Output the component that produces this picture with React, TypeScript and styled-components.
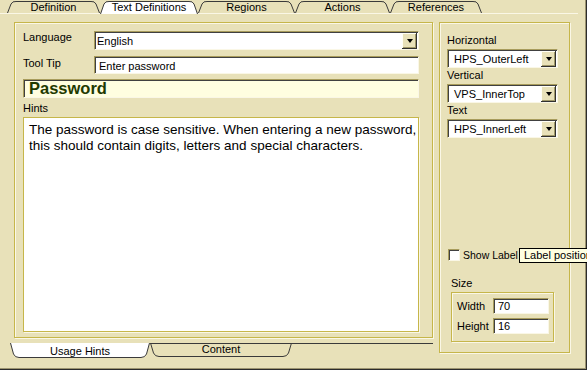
import React from 'react';
import styled, { createGlobalStyle } from 'styled-components';

const colors = {
  face: '#E8E1B9',
  line: '#C6B64A',
  light: '#FAF7E6',
  dark: '#3A3A3A',
  olive: '#A89C5C',
  note: '#FFFEE0',
};

const GlobalStyle = createGlobalStyle`
  html, body { margin: 0; padding: 0; background: ${colors.face}; }
  * { box-sizing: border-box; }
`;

const Window = styled.div`
  position: relative;
  width: 587px;
  height: 370px;
  overflow: hidden;
  background: ${colors.face};
  font-family: 'Liberation Sans', Arial, sans-serif;
  font-size: 11px;
  color: #000;
  box-shadow: inset -1px -1px 0 #2c2c2c, inset -2px -2px 0 #9c9470;
`;

const TopBar = styled.div`
  display: flex;
  height: 14px;
  width: 578px;
  padding-left: 7px;
  border-bottom: 1px solid ${colors.light};
`;

const TabShape = styled.div<{ $w: number; $h: number; $active?: boolean }>`
  position: relative;
  width: ${(p) => p.$w}px;
  height: ${(p) => p.$h}px;
  flex: none;
  z-index: ${(p) => (p.$active ? 1 : 0)};
  svg { position: absolute; inset: 0; }
`;

const TabText = styled.span<{ $top: number }>`
  position: relative;
  display: block;
  text-align: center;
  line-height: 13px;
  padding-top: ${(p) => p.$top}px;
  white-space: nowrap;
`;

const TopTab = ({ w, label, active }: { w: number; label: string; active?: boolean }) => {
  const h = active ? 14 : 13;
  return (
    <TabShape $w={w} $h={h} $active={active}>
      <svg width={w} height={h}>
        <path
          d={`M0.5,${h} L4,4 Q5.5,1 9,1.5 H${w - 9} Q${w - 5.5},1 ${w - 4},4 L${w - 0.5},${h}`}
          fill={active ? '#fff' : colors.face}
          stroke={colors.dark}
          strokeWidth={1}
        />
      </svg>
      <TabText $top={1}>{label}</TabText>
    </TabShape>
  );
};

const BottomTab = ({ w, label, active }: { w: number; label: string; active?: boolean }) => {
  const h = active ? 15 : 14;
  return (
    <TabShape $w={w} $h={h} $active={active}>
      <svg width={w} height={h}>
        <path
          d={`M0.5,0 L3.5,${h - 4} Q5,${h - 0.5} 9,${h - 0.5} H${w - 9} Q${w - 5},${h - 0.5} ${w - 3.5},${h - 4} L${w - 0.5},0`}
          fill={active ? '#fff' : colors.face}
          stroke={colors.dark}
          strokeWidth={1}
        />
        {!active && <line x1={0} y1={0.5} x2={w} y2={0.5} stroke={colors.dark} />}
      </svg>
      <TabText $top={active ? 2 : 0}>{label}</TabText>
    </TabShape>
  );
};

const Body = styled.div`
  display: flex;
  padding: 8px 0 0 14px;
`;

const LeftColumn = styled.div`
  display: flex;
  flex-direction: column;
  width: 419px;
`;

const Group = styled.div`
  display: flex;
  flex-direction: column;
  border: 1px solid ${colors.line};
  box-shadow: 1px 1px 0 ${colors.light}, inset 1px 1px 0 ${colors.light};
`;

const MainGroup = styled(Group)`
  height: 316px;
  padding: 8px 13px 5px 8px;
`;

const Row = styled.div<{ $gap?: number }>`
  display: flex;
  align-items: flex-start;
  margin-bottom: ${(p) => p.$gap ?? 0}px;
`;

const Label = styled.span<{ $w?: number; $top?: number }>`
  display: block;
  line-height: 13px;
  white-space: nowrap;
  padding-top: ${(p) => p.$top ?? 0}px;
  ${(p) => (p.$w ? `width: ${p.$w}px; flex: none;` : '')}
`;

const Field = styled.div<{ $h: number; $pad?: number; $bg?: string }>`
  display: flex;
  align-items: center;
  flex: 1;
  min-width: 0;
  height: ${(p) => p.$h}px;
  padding-left: ${(p) => p.$pad ?? 2}px;
  background: ${(p) => p.$bg ?? '#fff'};
  border: 1px solid;
  border-color: ${colors.olive} ${colors.light} ${colors.light} ${colors.olive};
  box-shadow: inset 1px 1px 0 #404040;
  white-space: nowrap;
`;

const FieldText = styled.span`
  flex: 1;
  padding-top: 1px;
`;

const DropButton = styled.div`
  flex: none;
  align-self: stretch;
  width: 15px;
  margin: 1px 1px 0 0;
  display: flex;
  align-items: center;
  justify-content: center;
  background: ${colors.face};
  box-shadow: inset -1px -1px 0 #303030, inset 1px 1px 0 #fffff6, inset -2px -2px 0 #a09868;

  &::after {
    content: '';
    border-left: 3.5px solid transparent;
    border-right: 3.5px solid transparent;
    border-top: 4px solid #000;
    margin-top: -1px;
  }
`;

const Combo = ({ value, h, pad }: { value: string; h: number; pad: number }) => (
  <Field $h={h} $pad={pad}>
    <FieldText>{value}</FieldText>
    <DropButton />
  </Field>
);

const TitleField = styled(Field)`
  flex: none;
  padding-left: 5px;
  font-size: 16.5px;
  font-weight: 700;
  color: #1f3a00;
  margin-bottom: 4px;
`;

const HintLabel = styled(Label)`
  margin-bottom: 2px;
`;

const HintsArea = styled.div`
  flex: 1;
  background: #fff;
  border: 1px solid ${colors.line};
  box-shadow: 1px 1px 0 ${colors.light};
  padding: 4px 5px;
  font-size: 13.5px;
  line-height: 16px;
  white-space: nowrap;
  overflow: hidden;
`;

const BottomBar = styled.div`
  display: flex;
  margin: 5px 0 0 -4px;
  width: 423px;
`;

const BarRule = styled.div`
  flex: 1;
  height: 1px;
  background: ${colors.dark};
`;

const SidePanel = styled(Group)`
  width: 131px;
  height: 331px;
  margin-left: 6px;
  padding: 11px 11px 10px 7px;
`;

const SideLabel = styled(Label)`
  margin-bottom: 2px;
`;

const SideCombo = styled.div`
  display: flex;
  margin-bottom: 1px;
`;

const Spacer = styled.div`
  flex: 1;
`;

const CheckRow = styled.div`
  position: relative;
  display: flex;
  align-items: center;
  height: 14px;
  margin-bottom: 15px;
`;

const CheckBox = styled.div`
  width: 12px;
  height: 12px;
  margin: 0 3px 0 1px;
  background: #fff;
  border: 1px solid;
  border-color: ${colors.olive} ${colors.light} ${colors.light} ${colors.olive};
  box-shadow: inset 1px 1px 0 #404040;
`;

const CheckLabel = styled(Label)`
  font-size: 10.5px;
`;

const Tooltip = styled.div`
  position: absolute;
  left: 72px;
  top: 0;
  z-index: 2;
  height: 15px;
  padding: 0 4px;
  line-height: 13px;
  background: #ffffe1;
  border: 1px solid #000;
  white-space: nowrap;
`;

const SizeSection = styled.div`
  display: flex;
  flex-direction: column;
  margin-left: 4px;
  width: 103px;
`;

const SizeBox = styled(Group)`
  height: 50px;
  margin-top: 2px;
  padding: 5px 5px 0 5px;
  gap: 4px;
`;

const NumRow = styled.div`
  display: flex;
  align-items: center;
`;

const NumField = styled(Field)`
  flex: none;
  width: 56px;
  padding-left: 4px;
`;

export default function App() {
  return (
    <>
      <GlobalStyle />
      <Window>
        <TopBar>
          <TopTab w={93} label="Definition" />
          <TopTab w={98} label="Text Definitions" active />
          <TopTab w={97} label="Regions" />
          <TopTab w={95} label="Actions" />
          <TopTab w={92} label="References" />
        </TopBar>
        <Body>
          <LeftColumn>
            <MainGroup>
              <Row $gap={6}>
                <Label $w={71}>Language</Label>
                <Combo value="English" h={19} pad={2} />
              </Row>
              <Row $gap={5}>
                <Label $w={71} $top={1}>Tool Tip</Label>
                <Field $h={18} $pad={4}>
                  <FieldText>Enter password</FieldText>
                </Field>
              </Row>
              <TitleField $h={19} $bg={colors.note}>Password</TitleField>
              <HintLabel>Hints</HintLabel>
              <HintsArea>
                The password is case sensitive. When entering a new password,
                <br />
                this should contain digits, letters and special characters.
              </HintsArea>
            </MainGroup>
            <BottomBar>
              <BottomTab w={140} label="Usage Hints" active />
              <BottomTab w={142} label="Content" />
              <BarRule />
            </BottomBar>
          </LeftColumn>
          <SidePanel>
            <SideLabel>Horizontal</SideLabel>
            <SideCombo>
              <Combo value="HPS_OuterLeft" h={19} pad={6} />
            </SideCombo>
            <SideLabel>Vertical</SideLabel>
            <SideCombo>
              <Combo value="VPS_InnerTop" h={19} pad={6} />
            </SideCombo>
            <SideLabel>Text</SideLabel>
            <SideCombo>
              <Combo value="HPS_InnerLeft" h={19} pad={6} />
            </SideCombo>
            <Spacer />
            <CheckRow>
              <CheckBox />
              <CheckLabel>Show Label</CheckLabel>
              <Tooltip>Label position</Tooltip>
            </CheckRow>
            <SizeSection>
              <Label>Size</Label>
              <SizeBox>
                <NumRow>
                  <Label $w={36}>Width</Label>
                  <NumField $h={16}>70</NumField>
                </NumRow>
                <NumRow>
                  <Label $w={36}>Height</Label>
                  <NumField $h={16}>16</NumField>
                </NumRow>
              </SizeBox>
            </SizeSection>
          </SidePanel>
        </Body>
      </Window>
    </>
  );
}
